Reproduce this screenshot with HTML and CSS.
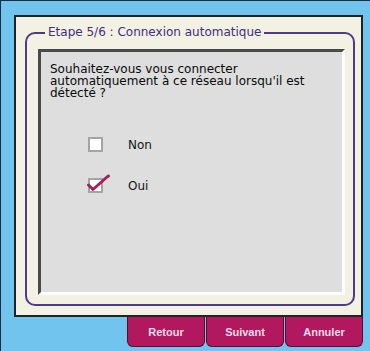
FILE: index.html
```html
<!DOCTYPE html>
<html lang="fr">
<head>
<meta charset="utf-8">
<link rel="stylesheet" href="styles.css">
</head>
<body>
<div class="screen">
  <div class="frame">
    <div class="group">
      <div class="legend">Etape 5/6 : Connexion automatique</div>
      <div class="panel">
        <p class="question">Souhaitez-vous vous connecter automatiquement à ce réseau lorsqu'il est détecté ?</p>
        <div class="options">
          <div class="option">
            <span class="box"></span>
            <span class="label">Non</span>
          </div>
          <div class="option">
            <span class="box checked">
              <svg class="tick" width="24" height="22" viewBox="0 0 24 22"><path d="M1.5 13 L6 17.5 L20 5 L21.5 4" fill="none" stroke="#a3225c" stroke-width="3" stroke-linecap="round" stroke-linejoin="round"/></svg>
            </span>
            <span class="label">Oui</span>
          </div>
        </div>
      </div>
    </div>
  </div>
  <div class="buttons">
    <div class="btn">Retour</div>
    <div class="btn">Suivant</div>
    <div class="btn">Annuler</div>
  </div>
</div>
</body>
</html>
```
FILE: styles.css
```css
html, body {
  margin: 0;
  padding: 0;
}
body {
  width: 370px;
  height: 351px;
  box-sizing: border-box;
  background: #71c4ee;
  border-left: 1px solid #1c2c3c;
  border-top: 1px solid #1c2c3c;
  overflow: hidden;
  font-family: "DejaVu Sans", Verdana, sans-serif;
}
.screen {
  padding: 14px 0 0 13px;
  display: flex;
  flex-direction: column;
}
.frame {
  width: 349px;
  height: 302px;
  box-sizing: border-box;
  border: 2px solid #222;
  background: #f3f1e4;
  padding: 15px 6px 9px 9px;
  display: flex;
  flex-direction: column;
}
.group {
  flex: 1;
  position: relative;
  border: 2px solid #4b3c87;
  border-radius: 10px;
  padding: 15px 8px 9px 11px;
  display: flex;
  flex-direction: column;
}
.legend {
  position: absolute;
  top: -10px;
  left: 18px;
  padding: 0 3px;
  background: #f3f1e4;
  color: #3f2f7c;
  font-size: 12px;
  line-height: 16px;
}
.panel {
  flex: 1;
  background: #dedede;
  border: 3px solid;
  border-color: #4a4a4a #fdfdfd #fdfdfd #4a4a4a;
  padding: 11px 9px;
}
.question {
  margin: 0;
  font-size: 12px;
  line-height: 12px;
  color: #0a0a0a;
}
.options {
  margin: 38px 0 0 38px;
  display: flex;
  flex-direction: column;
  gap: 26px;
}
.option {
  display: flex;
  align-items: center;
  gap: 25px;
  height: 15px;
}
.box {
  position: relative;
  width: 15px;
  height: 15px;
  box-sizing: border-box;
  border: 2px solid #a4a4a4;
  background: #fff;
}
.tick {
  position: absolute;
  left: -3px;
  top: -8px;
}
.label {
  font-size: 12px;
  color: #141414;
}
.buttons {
  display: flex;
  gap: 1px;
  margin-left: 113px;
}
.btn {
  width: 78px;
  height: 30px;
  box-sizing: border-box;
  background: #b1185e;
  border: 1px solid #5e0a30;
  border-top: none;
  border-radius: 0 0 6px 6px;
  color: #f8dcec;
  font-family: "Liberation Sans", Arial, sans-serif;
  font-weight: bold;
  font-size: 11px;
  display: flex;
  align-items: center;
  justify-content: center;
}
```
